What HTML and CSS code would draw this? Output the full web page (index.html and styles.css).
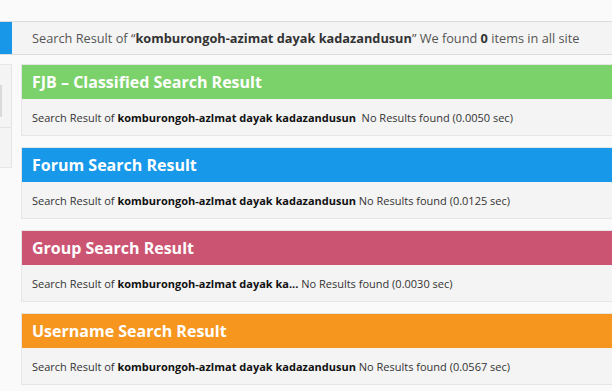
FILE: index.html
```html
<!DOCTYPE html>
<html lang="en">

<head>
  <meta charset="UTF-8" />
  <title>Search Result</title>
  <link rel="stylesheet" href="styles.css">
</head>

<body>
  <div class="topbar">
    <span class="topbar-accent"></span>
    <div class="topbar-text">Search Result of “<b>komburongoh-azimat dayak kadazandusun</b>” We found <b>0</b> items in all site</div>
  </div>

  <div class="main">
    <aside class="sidebar">
      <div class="sidebar-field"></div>
      <div class="sidebar-row"></div>
    </aside>

    <div class="results">
      <section class="card card-fjb">
        <h2 class="card-title">FJB – Classified Search Result</h2>
        <p class="card-body">Search Result of <b>komburongoh-azlmat dayak kadazandusun</b>&nbsp; No Results found (0.0050 sec)</p>
      </section>

      <section class="card card-forum">
        <h2 class="card-title">Forum Search Result</h2>
        <p class="card-body">Search Result of <b>komburongoh-azlmat dayak kadazandusun</b> No Results found (0.0125 sec)</p>
      </section>

      <section class="card card-group">
        <h2 class="card-title">Group Search Result</h2>
        <p class="card-body">Search Result of <b>komburongoh-azlmat dayak ka...</b> No Results found (0.0030 sec)</p>
      </section>

      <section class="card card-user">
        <h2 class="card-title">Username Search Result</h2>
        <p class="card-body">Search Result of <b>komburongoh-azlmat dayak kadazandusun</b> No Results found (0.0567 sec)</p>
      </section>
    </div>
  </div>
</body>

</html>
```

FILE: styles.css
```css
body {
  margin: 0;
  font-family: 'Open Sans', 'Noto Sans', sans-serif;
  background-color: #fafafa;
  color: #333;
  overflow: hidden;
  height: 391px;
}

/* top search summary bar */
.topbar {
  display: flex;
  margin-top: 21px;
  height: 32px;
  border-top: 1px solid #dcdcdc;
  border-bottom: 1px solid #dcdcdc;
  background-color: #f4f4f4;
}

.topbar-accent {
  width: 12px;
  flex: none;
  background-color: #1896e8;
}

.topbar-text {
  padding-left: 20px;
  font-size: 12.75px;
  line-height: 32px;
  color: #555;
  white-space: nowrap;
}

.topbar-text b {
  color: #333;
}

.main {
  display: flex;
  gap: 9px;
  margin-top: 9px;
}

/* narrow left column, mostly off screen */
.sidebar {
  flex: none;
  width: 12px;
  height: 104px;
  box-sizing: border-box;
  background-color: #f4f4f4;
  border-top: 1px solid #e6e6e6;
  border-right: 1px solid #e3e3e3;
  border-bottom: 1px solid #e6e6e6;
  padding-top: 20px;
}

.sidebar-field {
  width: 2px;
  height: 32px;
  background-color: #dadada;
}

.sidebar-row {
  margin-top: 10px;
  border-top: 1px solid #e3e3e3;
}

.results {
  flex: none;
  width: 620px;
  display: flex;
  flex-direction: column;
  gap: 11px;
}

.card {
  border: 1px solid #e6e6e6;
  background-color: #f4f4f4;
}

.card-title {
  margin: 0;
  height: 34px;
  display: flex;
  align-items: center;
  padding-left: 10px;
  font-size: 16px;
  font-weight: 700;
  color: #fff;
}

.card-fjb .card-title {
  background-color: #7bd16a;
}

.card-forum .card-title {
  background-color: #1898e9;
}

.card-group .card-title {
  background-color: #cc5473;
}

.card-user .card-title {
  background-color: #f7961f;
}

.card-body {
  margin: 0;
  height: 36px;
  display: flex;
  align-items: center;
  padding-left: 10px;
  font-size: 11px;
  color: #333;
  white-space: pre;
}

.card-body b {
  color: #111;
}
```
